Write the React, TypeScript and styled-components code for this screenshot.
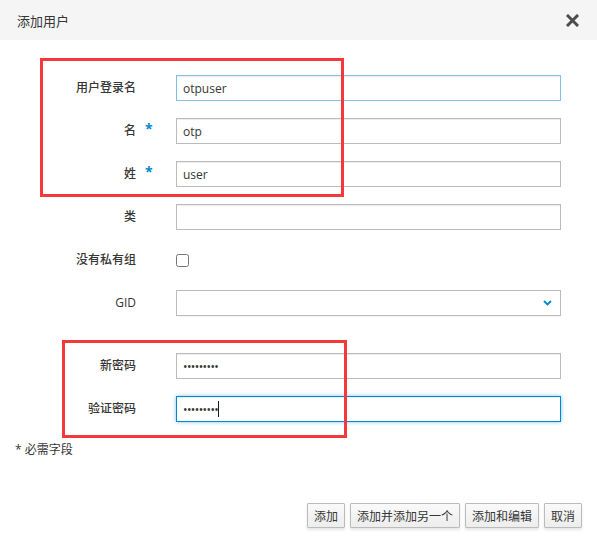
import React from "react";
import styled, { createGlobalStyle } from "styled-components";

const GlobalStyle = createGlobalStyle`
  html, body {
    margin: 0;
    padding: 0;
    background: #ffffff;
  }
  body {
    font-family: "Open Sans", "Noto Sans CJK SC", sans-serif;
    font-size: 12px;
    color: #363636;
  }
  * {
    box-sizing: border-box;
  }
`;

const Modal = styled.div`
  position: relative;
  width: 597px;
  height: 543px;
  display: flex;
  flex-direction: column;
  background: #ffffff;
`;

const Header = styled.div`
  height: 40px;
  flex: none;
  display: flex;
  align-items: center;
  justify-content: space-between;
  padding: 0 18px 0 17px;
  background: #f5f5f5;
`;

const Title = styled.h4`
  margin: 0;
  font-size: 13px;
  font-weight: 400;
  color: #363636;
`;

const CloseButton = styled.button`
  border: 0;
  padding: 0;
  background: none;
  width: 13px;
  height: 13px;
  display: flex;
  align-items: center;
  justify-content: center;
  cursor: pointer;
`;

const Form = styled.form`
  display: grid;
  grid-template-columns: 121px 40px 385px;
  row-gap: 17px;
  padding: 35px 0 0 15px;
  align-items: center;
`;

const Label = styled.label`
  text-align: right;
  font-weight: 500;
  font-size: 12px;
  line-height: 26px;
  color: #363636;
`;

const Required = styled.span`
  padding-left: 9px;
  color: #0088ce;
  font-size: 14px;
  font-weight: 700;
  line-height: 26px;
  position: relative;
  top: -2px;
`;

const Cell = styled.div`
  position: relative;
  height: 26px;
  display: flex;
  align-items: center;
`;

const TextInput = styled.input<{ $state?: "hover" | "focus" }>`
  width: 100%;
  height: 26px;
  padding: 2px 6px;
  font-family: "Open Sans", "Noto Sans CJK SC", sans-serif;
  font-size: 12px;
  color: #363636;
  background: #ffffff;
  border: 1px solid
    ${(p) =>
      p.$state === "focus" ? "#0088ce" : p.$state === "hover" ? "#7dc3e8" : "#bbbbbb"};
  border-radius: 0;
  outline: none;
  box-shadow: ${(p) =>
    p.$state === "focus"
      ? "inset 0 1px 1px rgba(3,3,3,0.075), 0 0 4px rgba(0,136,206,0.5)"
      : "inset 0 1px 1px rgba(3,3,3,0.075)"};
  letter-spacing: ${(p) => (p.type === "password" ? "-0.6px" : "0")};
`;

const Caret = styled.span`
  position: absolute;
  left: 42px;
  top: 5px;
  width: 1px;
  height: 16px;
  background: #1a1a1a;
`;

const Checkbox = styled.input`
  margin: 0;
  width: 13px;
  height: 13px;
`;

const SelectBox = styled.div`
  width: 100%;
  height: 26px;
  border: 1px solid #bbbbbb;
  background: #ffffff;
  display: flex;
  align-items: center;
  justify-content: flex-end;
  padding-right: 8px;
  box-shadow: 0 1px 1px rgba(3, 3, 3, 0.04);
`;

const Gap = styled.div`
  grid-column: 1 / -1;
  height: 3px;
`;

const Note = styled.div`
  padding: 19px 15px 0;
  font-size: 12px;
  line-height: 18px;
  color: #363636;
`;

const Footer = styled.div`
  margin-top: auto;
  display: flex;
  justify-content: flex-end;
  gap: 5px;
  padding: 0 15px 15px;
`;

const Button = styled.button`
  height: 25px;
  padding: 0 6px;
  font-family: "Open Sans", "Noto Sans CJK SC", sans-serif;
  font-size: 12px;
  color: #363636;
  background: linear-gradient(to bottom, #fafafa 0%, #ededed 100%);
  border: 1px solid #bbbbbb;
  border-radius: 1px;
  box-shadow: 0 2px 3px rgba(3, 3, 3, 0.1);
  cursor: pointer;
`;

const Highlight = styled.div<{ $left: number; $top: number; $w: number; $h: number }>`
  position: absolute;
  left: ${(p) => p.$left}px;
  top: ${(p) => p.$top}px;
  width: ${(p) => p.$w}px;
  height: ${(p) => p.$h}px;
  border: 3px solid #f5383a;
  pointer-events: none;
`;

const CloseIcon = () => (
  <svg width="13" height="13" viewBox="0 0 13 13">
    <path d="M2 2 L11 11 M11 2 L2 11" stroke="#4d4d4d" strokeWidth="3" strokeLinecap="square" />
  </svg>
);

const Chevron = () => (
  <svg width="9" height="6" viewBox="0 0 9 6">
    <polyline points="1,1 4.5,4.5 8,1" fill="none" stroke="#0088ce" strokeWidth="1.8" />
  </svg>
);

type FieldProps = {
  label: string;
  required?: boolean;
  children: React.ReactNode;
};

const Field: React.FC<FieldProps> = ({ label, required, children }) => (
  <>
    <Label>{label}</Label>
    {required ? <Required>*</Required> : <span />}
    <Cell>{children}</Cell>
  </>
);

const App: React.FC = () => {
  return (
    <>
      <GlobalStyle />
      <Modal>
        <Header>
          <Title>添加用户</Title>
          <CloseButton aria-label="关闭">
            <CloseIcon />
          </CloseButton>
        </Header>

        <Form onSubmit={(e) => e.preventDefault()}>
          <Field label="用户登录名">
            <TextInput $state="hover" defaultValue="otpuser" />
          </Field>
          <Field label="名" required>
            <TextInput defaultValue="otp" />
          </Field>
          <Field label="姓" required>
            <TextInput defaultValue="user" />
          </Field>
          <Field label="类">
            <TextInput />
          </Field>
          <Field label="没有私有组">
            <Checkbox type="checkbox" />
          </Field>
          <Field label="GID">
            <SelectBox>
              <Chevron />
            </SelectBox>
          </Field>
          <Gap />
          <Field label="新密码">
            <TextInput type="password" defaultValue="otpuser12" />
          </Field>
          <Field label="验证密码">
            <TextInput $state="focus" type="password" defaultValue="otpuser12" />
            <Caret />
          </Field>
        </Form>

        <Note>* 必需字段</Note>

        <Footer>
          <Button>添加</Button>
          <Button>添加并添加另一个</Button>
          <Button>添加和编辑</Button>
          <Button>取消</Button>
        </Footer>

        <Highlight $left={40} $top={58} $w={304} $h={139} />
        <Highlight $left={62} $top={340} $w={285} $h={98} />
      </Modal>
    </>
  );
};

export default App;
